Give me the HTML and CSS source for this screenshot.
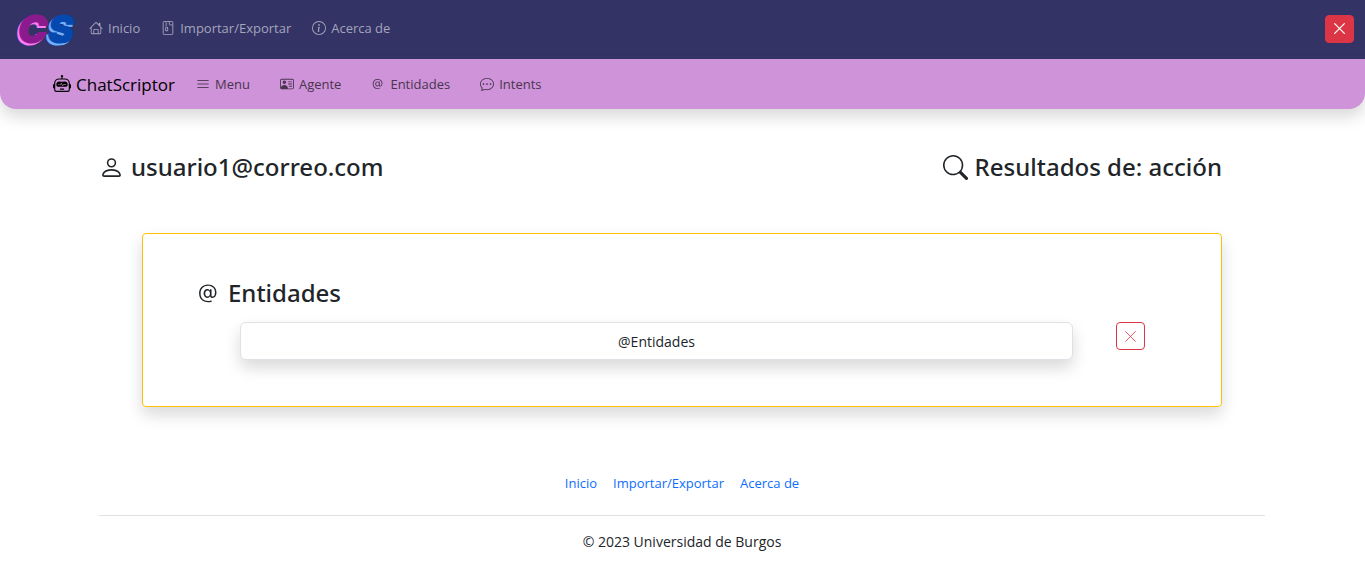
FILE: index.html
```html
<!DOCTYPE html>
<html lang="es">
<head>
<meta charset="utf-8">
<meta name="viewport" content="width=device-width, initial-scale=1">
<title>ChatScriptor</title>
<link rel="stylesheet" href="styles.css">
</head>
<body>
<header>
  <nav class="topbar" aria-label="Principal">
    <a class="logo" href="#" aria-label="ChatScriptor">
      <svg width="64" height="56" viewBox="0 0 64 56">
        <g class="logo-letters">
          <text x="0" y="44" fill="#ff7bf5" stroke="#ff7bf5">C</text>
          <text x="2" y="42" fill="#8b1a8f" stroke="#8b1a8f">C</text>
          <text x="30" y="44" fill="#6fb0ff" stroke="#6fb0ff">S</text>
          <text x="32" y="42" fill="#0448b0" stroke="#0448b0">S</text>
        </g>
      </svg>
    </a>
    <ul class="links">
      <li><a href="#"><svg class="icon" viewBox="0 0 16 16"><path d="M8.707 1.500a1 1 0 0 0-1.414 0L.646 8.146a.5.5 0 0 0 .708.708L2 8.207V13.500A1.500 1.500 0 0 0 3.500 15h9a1.500 1.500 0 0 0 1.500-1.500V8.207l.646.647a.5.5 0 0 0 .708-.708L13 5.793V2.500a.5.5 0 0 0-.5-.5h-1a.5.5 0 0 0-.5.5v1.293zm-.707.707 5 5V13.500a.5.5 0 0 1-.5.5H11v-4a1 1 0 0 0-1-1H6a1 1 0 0 0-1 1v4H3.500a.5.5 0 0 1-.5-.5V7.207zM6 10h4v4H6z" fill-rule="evenodd"/></svg>Inicio</a></li>
      <li><a href="#"><svg class="icon" viewBox="0 0 16 16"><path d="M5 7.500a1 1 0 0 1 1-1h1a1 1 0 0 1 1 1v.938l.4 1.599a1 1 0 0 1-.416 1.074l-.93.620a1 1 0 0 1-1.110 0l-.929-.620a1 1 0 0 1-.415-1.074l.4-1.599zm2 0H6v.938a1 1 0 0 1-.03.243l-.4 1.598.93.620.929-.620-.4-1.598A1 1 0 0 1 7 8.438z"/><path d="M5 1h1v1H5zM6 2h1v1H6zM5 3h1v1H5zM6 4h1v1H6zM5 5h1v1H5z"/><path d="M3.500 .5h9a1 1 0 0 1 1 1v13a1 1 0 0 1-1 1h-9a1 1 0 0 1-1-1v-13a1 1 0 0 1 1-1M9.500 .5v3a1 1 0 0 0 1 1h3" fill="none" stroke="currentColor"/></svg>Importar/Exportar</a></li>
      <li><a href="#"><svg class="icon" viewBox="0 0 16 16"><path d="M8 15A7 7 0 1 1 8 1a7 7 0 0 1 0 14m0 1A8 8 0 1 0 8 0a8 8 0 0 0 0 16"/><path d="m8.930 6.588-2.290.287-.082.380.450.083c.294.070.352.176.288.469l-.738 3.468c-.194.897.105 1.319.808 1.319.545 0 1.178-.252 1.465-.598l.088-.416c-.2.176-.492.246-.686.246-.275 0-.375-.193-.304-.533zM9 4.500a1 1 0 1 1-2 0 1 1 0 0 1 2 0"/></svg>Acerca de</a></li>
    </ul>
    <button class="btn btn-danger" type="button" aria-label="Salir"><svg class="icon" viewBox="0 0 16 16"><path d="M2 2 14 14M14 2 2 14" fill="none" stroke="currentColor" stroke-width="1.600" stroke-linecap="round"/></svg></button>
  </nav>
  <nav class="subbar" aria-label="Agente">
    <a class="brand" href="#"><svg class="icon icon-brand" viewBox="0 0 16 16"><path d="M6 12.500a.5.5 0 0 1 .5-.5h3a.5.5 0 0 1 0 1h-3a.5.5 0 0 1-.5-.5M3 8.062C3 6.760 4.235 5.765 5.530 5.886a26.600 26.600 0 0 0 4.940 0C11.765 5.765 13 6.760 13 8.062v1.157a.930.930 0 0 1-.765.935c-.845.147-2.340.346-4.235.346s-3.390-.2-4.235-.346A.930.930 0 0 1 3 9.219zm4.542-.827a.250.250 0 0 0-.217.068l-.920.900a25 25 0 0 1-1.871-.183.250.250 0 0 0-.068.495c.550.076 1.232.149 2.020.193a.250.250 0 0 0 .189-.071l.754-.736.847 1.710a.250.250 0 0 0 .404.062l.932-.970a25 25 0 0 0 1.922-.188.250.250 0 0 0-.068-.495c-.538.074-1.207.145-1.980.189a.250.250 0 0 0-.166.076l-.754.785-.842-1.700a.250.250 0 0 0-.182-.135"/><path d="M8.500 1.866a1 1 0 1 0-1 0V3h-2A4.500 4.500 0 0 0 1 7.500V8a1 1 0 0 0-1 1v2a1 1 0 0 0 1 1v1a2 2 0 0 0 2 2h10a2 2 0 0 0 2-2v-1a1 1 0 0 0 1-1V9a1 1 0 0 0-1-1v-.5A4.500 4.500 0 0 0 10.500 3h-2zM14 7.500V13a1 1 0 0 1-1 1H3a1 1 0 0 1-1-1V7.500A3.500 3.500 0 0 1 5.500 4h5A3.500 3.500 0 0 1 14 7.500"/></svg>ChatScriptor</a>
    <ul class="sublinks">
      <li><a href="#"><svg class="icon" viewBox="0 0 16 16"><path d="M2 4h12M2 8h12M2 12h12" stroke="currentColor" stroke-linecap="round"/></svg>Menu</a></li>
      <li><a href="#"><svg class="icon" viewBox="0 0 16 16"><path d="M5 8a2 2 0 1 0 0-4 2 2 0 0 0 0 4m4-2.500a.5.5 0 0 1 .5-.5h4a.5.5 0 0 1 0 1h-4a.5.5 0 0 1-.5-.5M9 8a.5.5 0 0 1 .5-.5h4a.5.5 0 0 1 0 1h-4A.5.5 0 0 1 9 8m1 2.500a.5.5 0 0 1 .5-.5h3a.5.5 0 0 1 0 1h-3a.5.5 0 0 1-.5-.5"/><path d="M2 2a2 2 0 0 0-2 2v8a2 2 0 0 0 2 2h12a2 2 0 0 0 2-2V4a2 2 0 0 0-2-2zM1 4a1 1 0 0 1 1-1h12a1 1 0 0 1 1 1v8a1 1 0 0 1-1 1H8.960q.040-.245.040-.5C9 10.567 7.210 9 5 9c-2.086 0-3.800 1.398-3.984 3.181A1 1 0 0 1 1 12z"/></svg>Agente</a></li>
      <li><a href="#"><svg class="icon" viewBox="0 0 16 16"><use href="#at"/></svg>Entidades</a></li>
      <li><a href="#"><svg class="icon" viewBox="0 0 16 16"><path d="M5 8a1 1 0 1 1-2 0 1 1 0 0 1 2 0m4 0a1 1 0 1 1-2 0 1 1 0 0 1 2 0m3 1a1 1 0 1 0 0-2 1 1 0 0 0 0 2"/><path d="m2.165 15.803.020-.004c1.830-.363 2.948-.842 3.468-1.105A9 9 0 0 0 8 15c4.418 0 8-3.134 8-7s-3.582-7-8-7-8 3.134-8 7c0 1.760.743 3.370 1.970 4.600a10.400 10.400 0 0 1-.524 2.318l-.003.011a11 11 0 0 1-.244.637c-.079.186.074.394.273.362a22 22 0 0 0 .693-.125m.800-3.108a1 1 0 0 0-.287-.801C1.618 10.830 1 9.468 1 8c0-3.192 3.004-6 7-6s7 2.808 7 6-3.004 6-7 6a8 8 0 0 1-2.088-.272 1 1 0 0 0-.711.074c-.387.196-1.240.570-2.634.893a11 11 0 0 0 .398-2"/></svg>Intents</a></li>
    </ul>
  </nav>
</header>

<main class="container">
  <div class="heading-row">
    <h1 class="title"><svg class="icon icon-title" viewBox="0 0 16 16"><path d="M8 8a3 3 0 1 0 0-6 3 3 0 0 0 0 6m2-3a2 2 0 1 1-4 0 2 2 0 0 1 4 0m4 8c0 1-1 1-1 1H3s-1 0-1-1 1-4 6-4 6 3 6 4m-1-.004c-.001-.246-.154-.986-.832-1.664C11.516 10.680 10.289 10 8 10s-3.516.680-4.168 1.332c-.678.678-.830 1.418-.832 1.664z"/></svg>usuario1@correo.com</h1>
    <h2 class="title"><svg class="icon icon-title" viewBox="0 0 16 16"><path d="M11.742 10.344a6.500 6.500 0 1 0-1.397 1.398h-.001q.044.060.098.115l3.850 3.850a1 1 0 0 0 1.415-1.414l-3.850-3.850a1 1 0 0 0-.115-.100zM12 6.500a5.500 5.500 0 1 1-11 0 5.500 5.500 0 0 1 11 0"/></svg>Resultados de: acción</h2>
  </div>
  <section class="card">
    <h2 class="title"><svg class="icon icon-title" viewBox="0 0 16 16"><path id="at" d="M13.106 7.222c0-2.967-2.249-5.032-5.482-5.032-3.350 0-5.646 2.318-5.646 5.702 0 3.493 2.235 5.708 5.762 5.708.862 0 1.689-.123 2.304-.335v-.862c-.430.199-1.354.328-2.290.328-2.926 0-4.813-1.880-4.813-4.798 0-2.844 1.921-4.881 4.594-4.881 2.735 0 4.608 1.688 4.608 4.156 0 1.682-.554 2.769-1.416 2.769-.492 0-.772-.280-.772-.760V5.206H8.923v.834h-.110c-.266-.595-.881-.964-1.600-.964-1.400 0-2.378 1.162-2.378 2.823 0 1.737.957 2.906 2.379 2.906.800 0 1.415-.390 1.709-1.087h.110c.081.670.703 1.148 1.503 1.148 1.572 0 2.570-1.415 2.570-3.643zm-7.177.704c0-1.197.540-1.907 1.456-1.907.930 0 1.524.738 1.524 1.907S8.308 9.840 7.371 9.840c-.895 0-1.442-.725-1.442-1.914"/></svg>Entidades</h2>
    <div class="result">
      <button class="result-button" type="button">@Entidades</button>
      <button class="btn btn-outline" type="button" aria-label="Eliminar"><svg class="icon" viewBox="0 0 16 16"><path d="M2 2 14 14M14 2 2 14" fill="none" stroke="currentColor" stroke-linecap="round"/></svg></button>
    </div>
  </section>
</main>

<footer class="container footer">
  <ul class="footer-links">
    <li><a href="#">Inicio</a></li>
    <li><a href="#">Importar/Exportar</a></li>
    <li><a href="#">Acerca de</a></li>
  </ul>
  <p class="copyright">© 2023 Universidad de Burgos</p>
</footer>
</body>
</html>
```
FILE: styles.css
```css
* { box-sizing: border-box; }
body {
  margin: 0;
  background: #fff;
  color: #212529;
  font: 400 14px/21px "Segoe UI", "Open Sans", "Noto Sans", sans-serif;
}
ul { list-style: none; margin: 0; padding: 0; }
a { text-decoration: none; color: inherit; }
button { font: inherit; cursor: pointer; }
.icon { width: 14px; height: 14px; fill: currentColor; flex: none; }

.topbar {
  display: flex;
  align-items: center;
  height: 59px;
  padding: 0 11px 2px 16px;
  background: #333366;
  color: #a5a5bb;
}
.logo { display: flex; }
.logo-letters {
  font: italic 900 39px Inter, sans-serif;
  stroke-width: 1px;
}
.links { display: flex; gap: 21px; flex: 1; margin-left: 9px; font-size: 13px; }
.links a { display: flex; align-items: center; gap: 5px; }
.links .icon { margin-bottom: 2px; }

.btn {
  display: flex;
  align-items: center;
  justify-content: center;
  width: 29px;
  height: 28px;
  padding: 0;
  border: 1px solid #dc3545;
  border-radius: 4px;
}
.btn .icon { width: 13px; height: 13px; }
.btn-danger { background: #dc3545; color: #fff; }
.btn-outline { background: #fff; color: #dc3545; }

.subbar {
  display: flex;
  align-items: center;
  height: 50px;
  padding: 0 53px;
  background: #ce93d8;
  border-radius: 0 0 16px 16px;
  box-shadow: 0 8px 16px rgba(0, 0, 0, .15);
}
.brand { display: flex; align-items: center; gap: 5px; color: #000; font-size: 17px; }
.icon-brand { width: 18px; height: 18px; }
.sublinks { display: flex; gap: 30px; margin-left: 21px; color: #4a3550; font-size: 13px; }
.sublinks a { display: flex; align-items: center; gap: 5px; }

.container { margin: 0 100px 0 99px; }
.heading-row {
  display: flex;
  justify-content: space-between;
  margin: 43px 43px 0 0;
}
.title {
  display: flex;
  align-items: center;
  gap: 7px;
  margin: 0;
  font-family: "Segoe UI", "Noto Sans", "Open Sans", sans-serif;
  font-size: 24px;
  line-height: 30px;
  font-weight: 500;
}
.icon-title { width: 25px; height: 25px; }

.card {
  margin: 51px 43px 0;
  padding: 44px 76px 46px 53px;
  border: 1px solid #ffc107;
  border-radius: 4px;
  box-shadow: 0 8px 16px rgba(0, 0, 0, .15);
}
.result { display: flex; align-items: flex-start; gap: 43px; margin: 14px 0 0 44px; }
.result-button {
  flex: 1;
  height: 38px;
  border: 1px solid #dee2e6;
  border-radius: 6px;
  background: #fff;
  color: #212529;
  box-shadow: 0 8px 16px rgba(0, 0, 0, .15);
}

.footer { margin-top: 66px; text-align: center; }
.footer-links {
  display: flex;
  justify-content: center;
  gap: 16px;
  padding-bottom: 21px;
  border-bottom: 1px solid #dee2e6;
  color: #0d6efd;
  font-size: 13px;
}
.copyright { margin: 15px 0; }
```
